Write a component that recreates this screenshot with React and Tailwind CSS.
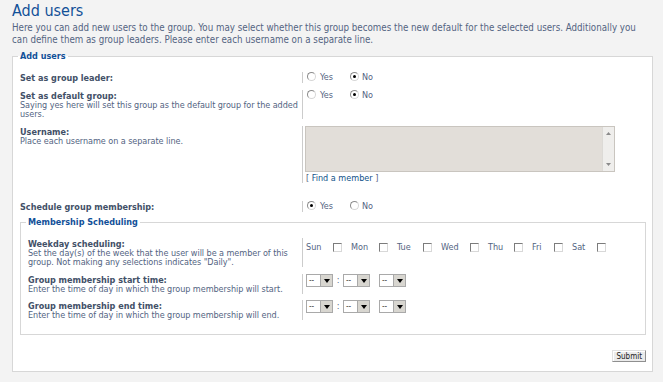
import React from "react";

const days = [
  { name: "Sun", w: "w-[27px]" },
  { name: "Mon", w: "w-[28px]" },
  { name: "Tue", w: "w-[26px]" },
  { name: "Wed", w: "w-[29px]" },
  { name: "Thu", w: "w-[26px]" },
  { name: "Fri", w: "w-[22px]" },
  { name: "Sat", w: "w-[25px]" },
];

const Radio = ({ checked }) => (
  <span className="relative inline-block w-[9px] h-[9px] rounded-full border border-[#8c8c8c] border-b-[#d6d6d6] border-r-[#d6d6d6] bg-white">
    {checked && (
      <span className="absolute left-[2px] top-[2px] w-[3px] h-[3px] rounded-full bg-black" />
    )}
  </span>
);

const YesNo = ({ yes }) => (
  <div className="flex items-center h-[11px]">
    <span className="ml-[1px] mt-[-2px] flex"><Radio checked={yes} /></span>
    <span className="ml-[4px] w-[30px]">Yes</span>
    <span className="mt-[-2px] flex"><Radio checked={!yes} /></span>
    <span className="ml-[3px]">No</span>
  </div>
);

const Check = () => (
  <span className="inline-block w-[9px] h-[9px] border border-[#7c7c7c] border-b-[#d8d8d8] border-r-[#d8d8d8] bg-white" />
);

const Select = () => (
  <div className="flex w-[27px] h-[13px] border border-[#a9a9a9] bg-white">
    <span className="flex-1 pl-[2px] text-[8px] leading-[11px] text-[#333]">--</span>
    <span className="w-[12px] h-full bg-[#d8d6d0] border-l border-[#a9a9a9] flex items-center justify-center">
      <svg width="6" height="4" viewBox="0 0 6 4">
        <path d="M0 0h6L3 4z" fill="#000" />
      </svg>
    </span>
  </div>
);

const TimeSelects = () => (
  <div className="flex items-center">
    <Select />
    <span className="w-[10px] text-center text-[#536482]">:</span>
    <Select />
    <span className="w-[9px]" />
    <Select />
  </div>
);

const Row = ({ label, desc, children, dt = "w-[282px]", cls = "" }) => (
  <div className={`flex ${cls}`}>
    <div className={`${dt} pt-[1px] pr-[1px]`}>
      <div className="font-bold text-[#425067] leading-[10px]">{label}</div>
      {desc && <div className="text-[#536482] leading-[9px] tracking-[-0.05px]">{desc}</div>}
    </div>
    <div className="border-l border-[#cccccc] pl-[3px] text-[#536482]">{children}</div>
  </div>
);

const App = () => (
  <div className="w-[663px] h-[382px] overflow-hidden bg-[#f3f3f3] pl-[12px] pr-[10px] text-[9px] [font-family:'DejaVu_Sans_Condensed','DejaVu_Sans',sans-serif]">
    <h1 className="pt-[1px] text-[16px] leading-[20px] text-[#115098] font-normal">Add users</h1>
    <p className="mt-[1px] text-[9.7px] leading-[12px] text-[#536482]">
      Here you can add new users to the group. You may select whether this group becomes the new default for the selected users. Additionally you can define them as group leaders. Please enter each username on a separate line.
    </p>
    <fieldset className="mt-[4px] border border-[#d7d7d7] bg-white pl-[5px] pr-[6px] pt-[10px] pb-[9px]">
      <legend className="px-[2px] font-bold text-[#115098] leading-[12px]">Add users</legend>
      <div className="ml-[2px]">
        <Row label="Set as group leader:">
          <YesNo yes={false} />
        </Row>
        <Row
          cls="mt-[7px]"
          label="Set as default group:"
          desc="Saying yes here will set this group as the default group for the added users."
        >
          <YesNo yes={false} />
        </Row>
        <Row cls="mt-[7px]" label="Username:" desc="Place each username on a separate line.">
          <div className="ml-[-1px] flex w-[310px] h-[46px] border border-[#c9c5bf] bg-[#e2ded9]">
            <div className="flex-1" />
            <div className="w-[12px] h-full bg-[#efeeec] border-l border-[#dcdad6] flex flex-col items-center justify-between py-[5px]">
              <svg width="5" height="3" viewBox="0 0 5 3"><path d="M0 3h5L2.5 0z" fill="#8a8a8a" /></svg>
              <svg width="5" height="3" viewBox="0 0 5 3"><path d="M0 0h5L2.5 3z" fill="#8a8a8a" /></svg>
            </div>
          </div>
          <div className="mt-[1px] leading-[10px] text-[#536482]">
            [ <span className="text-[#105289]">Find a member</span> ]
          </div>
        </Row>
        <Row cls="mt-[18px]" label="Schedule group membership:">
          <YesNo yes={true} />
        </Row>
      </div>

      <fieldset className="ml-[2px] mt-[4px] border border-[#d7d7d7] pl-[5px] pr-[6px] pt-[10px] pb-[14px]">
        <legend className="px-[2px] font-bold text-[#115098] leading-[12px]">Membership Scheduling</legend>
        <div className="ml-[2px]">
          <Row
            dt="w-[274px]"
            label="Weekday scheduling:"
            desc={'Set the day(s) of the week that the user will be a member of this group. Not making any selections indicates "Daily".'}
          >
            <div className="flex items-center pt-[3px]">
              {days.map((d) => (
                <div key={d.name} className="flex items-center mr-[9px]">
                  <span className={d.w}>{d.name}</span>
                  <Check />
                </div>
              ))}
            </div>
          </Row>
          <Row
            dt="w-[274px]"
            cls="mt-[7px]"
            label="Group membership start time:"
            desc="Enter the time of day in which the group membership will start."
          >
            <TimeSelects />
          </Row>
          <Row
            dt="w-[274px]"
            cls="mt-[6px]"
            label="Group membership end time:"
            desc="Enter the time of day in which the group membership will end."
          >
            <TimeSelects />
          </Row>
        </div>
      </fieldset>

      <div className="mt-[15px] flex justify-end">
        <button className="h-[12px] px-[3px] bg-[#ebebeb] border border-[#8f8f8f] border-t-[#e0e0e0] border-l-[#e0e0e0] shadow-[inset_1px_1px_0_#fff] text-[8px] leading-[9px] text-[#222]">
          Submit
        </button>
      </div>
    </fieldset>
  </div>
);

export default App;
